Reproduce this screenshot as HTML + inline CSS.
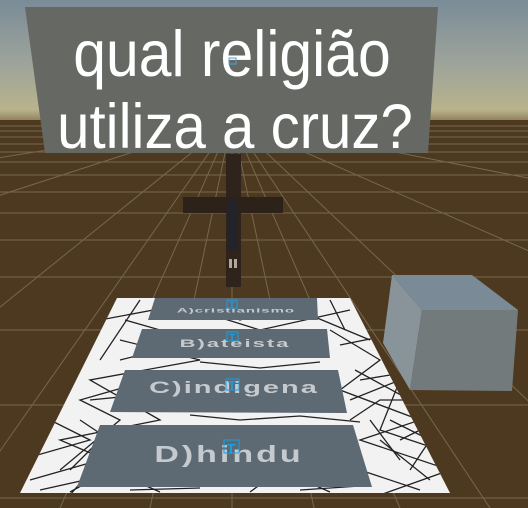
<!DOCTYPE html>
<html><head><meta charset="utf-8"><style>
html,body{margin:0;padding:0;width:528px;height:508px;overflow:hidden;background:#4b3820}
svg{display:block}
</style></head><body>
<svg width="528" height="508" viewBox="0 0 528 508" xmlns="http://www.w3.org/2000/svg">
<defs>
<linearGradient id="sky" x1="0" y1="0" x2="0" y2="1">
<stop offset="0" stop-color="#7a8c98"/>
<stop offset="0.55" stop-color="#9fa59a"/>
<stop offset="0.9" stop-color="#b9b38c"/>
<stop offset="1" stop-color="#8a7a55"/>
</linearGradient>
<clipPath id="matc"><polygon points="117,298 350,298 450,493 20,493"/></clipPath>
</defs>
<rect x="0" y="0" width="528" height="122" fill="url(#sky)"/>
<rect x="0" y="120" width="528" height="388" fill="#4d3920"/>
<g stroke="#8a7a62" stroke-width="1" opacity="0.7">
<line x1="0" y1="126" x2="528" y2="126"/><line x1="0" y1="131" x2="528" y2="131"/>
<line x1="0" y1="137" x2="528" y2="137"/><line x1="0" y1="144" x2="528" y2="144"/>
<line x1="0" y1="152" x2="528" y2="152"/><line x1="0" y1="162" x2="528" y2="162"/>
<line x1="0" y1="175" x2="528" y2="175"/><line x1="0" y1="192" x2="528" y2="192"/>
<line x1="0" y1="213" x2="528" y2="213"/><line x1="0" y1="240" x2="528" y2="240"/>
<line x1="0" y1="277" x2="528" y2="277"/><line x1="0" y1="330" x2="528" y2="330"/>
<line x1="0" y1="405" x2="528" y2="405"/><line x1="0" y1="498" x2="528" y2="498"/>
<line x1="232" y1="120" x2="232" y2="508"/>
<line x1="232" y1="120" x2="150" y2="508"/><line x1="232" y1="120" x2="314" y2="508"/>
<line x1="232" y1="120" x2="60" y2="508"/><line x1="232" y1="120" x2="400" y2="508"/>
<line x1="232" y1="120" x2="-40" y2="508"/><line x1="232" y1="120" x2="490" y2="508"/>
<line x1="232" y1="120" x2="-140" y2="420"/><line x1="232" y1="120" x2="580" y2="450"/>
<line x1="232" y1="120" x2="-200" y2="260"/><line x1="232" y1="120" x2="640" y2="300"/>
<line x1="232" y1="120" x2="-200" y2="190"/><line x1="232" y1="120" x2="640" y2="200"/>
</g>
<!-- sign -->
<polygon points="25,7 438,7 428,153 45,153" fill="#656863"/>
<text x="232" y="76" font-family="Liberation Sans, sans-serif" font-size="62" fill="#fff" text-anchor="middle" transform="translate(232 76) scale(0.95 1.05) translate(-232 -76)">qual religião</text>
<text x="235" y="148" font-family="Liberation Sans, sans-serif" font-size="60" fill="#fff" text-anchor="middle" transform="translate(235 148) scale(0.97 1.05) translate(-235 -148)">utiliza a cruz?</text>
<rect x="229" y="58" width="7" height="6" fill="none" stroke="#4aa0d8" stroke-width="1"/>
<!-- cross -->
<rect x="226" y="154" width="15" height="133" fill="#2f241b"/>
<rect x="183" y="197" width="100" height="16" fill="#2c221a"/>
<rect x="228" y="200" width="10" height="50" fill="#23242a"/>
<rect x="229" y="259" width="3" height="9" fill="#b0a89a"/><rect x="234" y="259" width="3" height="9" fill="#b0a89a"/>
<!-- cube -->
<polygon points="392,275 472,275 518,310 422,310" fill="#7a8a96"/>
<polygon points="392,275 422,310 410,390 383,343" fill="#89939a"/>
<polygon points="422,310 518,310 512,391 410,390" fill="#737a7b"/>
<!-- mat -->
<polygon points="117,298 350,298 450,493 20,493" fill="#f2f2f2"/>
<g clip-path="url(#matc)" stroke="#222" stroke-width="1.3" fill="none">
<path d="M100,320 L180,305 L260,330 L350,310 M120,340 L200,360 L90,380 L160,420 L60,440 L130,470 L40,490"/>
<path d="M330,330 L380,360 L340,390 L420,420 L360,440 L450,470 L380,495"/>
<path d="M140,300 L100,360 M200,300 L240,320 L300,300 M310,315 L370,340"/>
<path d="M60,470 L120,420 L80,400 L150,380 M30,480 L100,460 L70,495"/>
<path d="M350,400 L400,380 L380,430 L440,450 M360,470 L420,490 M400,460 L370,420"/>
<path d="M200,362 L260,368 L320,362 M190,415 L240,420 L300,416 L360,422"/>
<path d="M120,360 L180,345 M340,345 L390,335 M90,400 L140,395 M355,370 L410,400"/>
<path d="M110,430 L70,470 M380,440 L430,480 M130,490 L200,488 M300,490 L360,486"/>
<path d="M20,460 L90,440 L50,420 M70,492 L110,470 L160,492 M250,492 L280,470 L330,492"/>
<path d="M390,420 L430,440 L410,470 M360,380 L420,370 M330,300 L345,330 M125,320 L160,330"/>
<path d="M80,420 L110,440 M400,440 L440,420 M350,420 L380,400 L420,400"/>
</g>
<!-- panels -->
<g font-family="Liberation Sans, sans-serif" font-weight="bold" fill="#c5cace" text-anchor="middle">
<polygon points="155,298 317,298 318,320 148,320" fill="#5d6973"/>
<text x="236" y="314" font-size="15" letter-spacing="1" transform="translate(236 311) scale(1 0.45) translate(-236 -311)">A)cristianismo</text>
<polygon points="142,329 327,329 330,358 132,358" fill="#5d6973"/>
<text x="235" y="349" font-size="22" letter-spacing="2" transform="translate(235 345) scale(1 0.5) translate(-235 -345)">B)ateista</text>
<polygon points="125,370 338,370 347,413 110,412" fill="#5d6973"/>
<text x="234" y="396" font-size="29" letter-spacing="2" transform="translate(234 389) scale(1 0.58) translate(-234 -389)">C)indigena</text>
<polygon points="100,425 353,425 372,487 77,487" fill="#5d6973"/>
<text x="229" y="465" font-size="34" letter-spacing="3" transform="translate(229 455) scale(1 0.68) translate(-229 -455)">D)hindu</text>
</g>
<g fill="none" stroke="#1a9ee0" stroke-width="1">
<rect x="227" y="300" width="10" height="8"/><rect x="227" y="332" width="11" height="9"/>
<rect x="226" y="379" width="13" height="11"/><rect x="224" y="440" width="15" height="13"/>
</g>
<g fill="#1a9ee0" font-family="Liberation Sans, sans-serif" font-weight="bold" text-anchor="middle">
<text x="232" y="308" font-size="9">T</text><text x="232" y="341" font-size="10">T</text>
<text x="232" y="390" font-size="13">T</text><text x="231" y="454" font-size="15">T</text>
</g>
</svg>
</body></html>
